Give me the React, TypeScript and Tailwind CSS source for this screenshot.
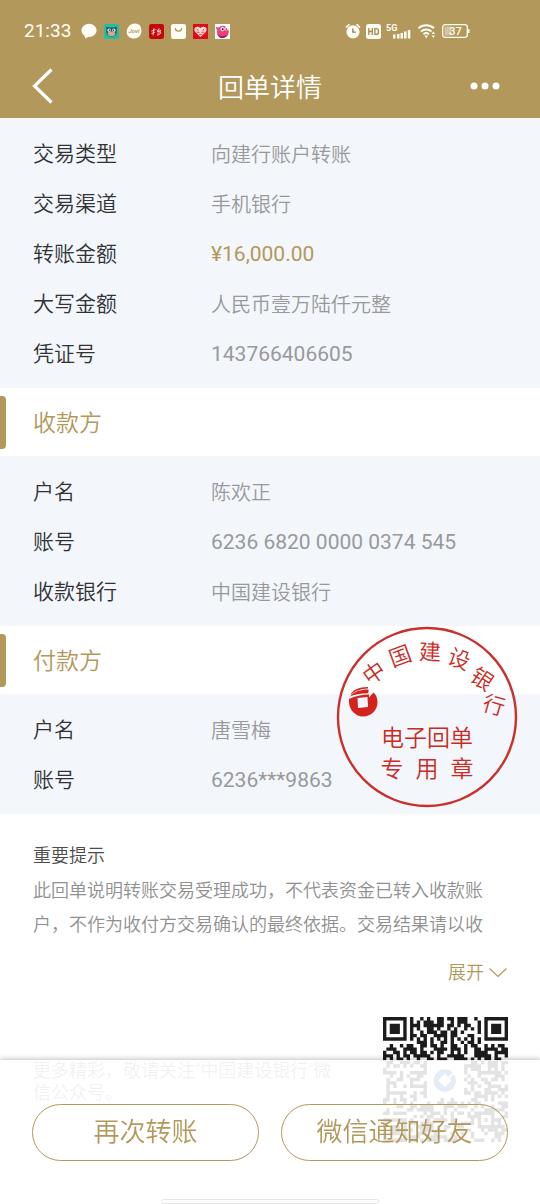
import type { ReactNode } from "react";

type Field = { label: string; value: string; numeric?: boolean; accent?: boolean };

const transaction: Field[] = [
  { label: "交易类型", value: "向建行账户转账" },
  { label: "交易渠道", value: "手机银行" },
  { label: "转账金额", value: "¥16,000.00", numeric: true, accent: true },
  { label: "大写金额", value: "人民币壹万陆仟元整" },
  { label: "凭证号", value: "143766406605", numeric: true },
];

const payee: Field[] = [
  { label: "户名", value: "陈欢正" },
  { label: "账号", value: "6236 6820 0000 0374 545", numeric: true },
  { label: "收款银行", value: "中国建设银行" },
];

const payer: Field[] = [
  { label: "户名", value: "唐雪梅" },
  { label: "账号", value: "6236***9863", numeric: true },
];

function StatusBar() {
  return (
    <div className="flex h-[54px] items-center pt-2 pl-6 font-normal text-[#fffdf5]">
      <span className="w-[57px] text-[19px] leading-6">21:33</span>
      <div className="flex items-center gap-[7px]">
        <svg className="size-4" viewBox="0 0 16 16" aria-hidden="true">
          <ellipse cx="8" cy="7.4" rx="7.6" ry="6.6" fill="currentColor" />
          <path d="M3 11.5 4.4 15.6 9 13z" fill="currentColor" />
        </svg>
        <svg className="size-[15px]" viewBox="0 0 16 16" aria-hidden="true">
          <rect width="16" height="16" rx="2.5" fill="#1fbfa0" />
          <path d="M2.500 3l3.500.8h4l3.500-.8V8.500c0 3-2 5-5.500 5s-5.500-2-5.500-5z" fill="#2b4d5a" />
          <circle cx="5.500" cy="6.600" r="1.800" fill="#dff3ee" />
          <circle cx="10.500" cy="6.600" r="1.800" fill="#dff3ee" />
          <ellipse cx="8" cy="10.500" rx="4.200" ry="2.500" fill="#c9ab92" />
          <circle cx="5.800" cy="6.700" r=".8" fill="#16232c" />
          <circle cx="10.200" cy="6.700" r=".8" fill="#16232c" />
        </svg>
        <svg className="size-4" viewBox="0 0 16 16" aria-hidden="true">
          <path d="M9 .6c4.500 0 6.600 3 6.400 7.400-.2 4.600-3.200 7.500-7.400 7.500S.7 13 .7 9 4 .6 9 .6z" fill="currentColor" />
          <text x="8" y="10.200" textAnchor="middle" fontSize="6" fontStyle="italic" fontWeight="500" fill="#a5884c">Jovi</text>
        </svg>
        <svg className="size-[15px]" viewBox="0 0 16 16" aria-hidden="true">
          <rect width="16" height="16" rx="2.500" fill="#c2080c" />
          <path d="M2.500 7.500 7 6M5.200 4.500 4.300 12M2.600 10l4-1.300M8.500 6l1.600 1.800M11 4.500 9 8.500l4-2M9 12c2-.5 4-2 3.500-3.500S9.500 9.500 9.200 12" fill="none" stroke="#ffe9df" strokeWidth=".9" />
        </svg>
        <svg className="size-[15px]" viewBox="0 0 16 16" aria-hidden="true">
          <rect width="16" height="16" rx="2.500" fill="currentColor" />
          <path d="M4.500 5c.6 3.600 6.400 3.600 7 0" fill="none" stroke="#a5884c" strokeWidth="1.200" strokeLinecap="round" />
        </svg>
        <svg className="size-[15px]" viewBox="0 0 16 16" aria-hidden="true">
          <rect width="16" height="16" fill="#dd0c18" />
          <path d="M8 13.800 2.300 8.500C.5 6 1.800 3 4.500 3 6.300 3 7.400 3.600 8 4.500 8.600 3.600 9.700 3 11.500 3c2.700 0 4 3 2.200 5.500z" fill="#ffd8d4" />
          <path d="M4 5.500l2 1.500M12 5.500l-2 1.500M4 8.800h3M9 8.800h3M6.500 11h3" stroke="#dd0c18" strokeWidth=".8" />
        </svg>
        <svg className="size-[15px]" viewBox="0 0 16 16" aria-hidden="true">
          <rect width="16" height="16" fill="#fff" />
          <circle cx="8.400" cy="8.200" r="6.300" fill="#ee3f79" />
          <path d="M2 10c3 4 8 4 12 1-2 5-10 6-12-1z" fill="#8a1d5c" />
          <circle cx="8" cy="5.400" r="2.200" fill="#fff" />
          <circle cx="12" cy="5" r="1.900" fill="#fff" />
          <circle cx="8.300" cy="5.600" r="1" fill="#440022" />
          <circle cx="12" cy="5.200" r=".8" fill="#440022" />
          <path d="M1 3l3 1-2 3z" fill="#e83a6f" />
        </svg>
      </div>
      <div className="mr-[70px] ml-auto flex items-center gap-[5px]">
        <svg className="size-4" viewBox="0 0 16 16" aria-hidden="true">
          <circle cx="8" cy="8.800" r="6.600" fill="currentColor" />
          <path d="M1.500 4 4 1.600M14.500 4 12 1.600" stroke="currentColor" strokeWidth="1.700" strokeLinecap="round" />
          <path d="M7.800 5.500v3.700h3" fill="none" stroke="#96793f" strokeWidth="1.300" />
        </svg>
        <svg className="size-[15px]" viewBox="0 0 15 15" aria-hidden="true">
          <rect width="15" height="15" rx="2.500" fill="currentColor" />
          <path d="M2.800 4v7M6.300 4v7M2.800 7.500h3.500M8.900 4.600v5.800h1.500q2 0 2-2V6.600q0-2-2-2z" fill="none" stroke="#a5884c" strokeWidth="1.300" />
        </svg>
        <svg className="h-4 w-[26px]" viewBox="0 0 26 16" aria-hidden="true">
          <text x="0" y="7.500" fontSize="9" fontWeight="700" fill="currentColor">5G</text>
          <path d="M7 11.500h2.500V15.500H7zM11 11h2.500v4.500H11zM14.500 10h2.500v5.500h-2.500zM18 8.500h2.500v7H18zM21.800 7h2.500v8.500h-2.500z" fill="currentColor" />
        </svg>
        <svg className="h-4 w-5" viewBox="0 0 20 16" aria-hidden="true">
          <path d="M1.500 5.200c4.300-4 11.200-4 15.500 0M4 8.400c3-2.700 7.500-2.700 10.500 0M6.500 11.200c1.700-1.400 3.800-1.400 5.500 0" fill="none" stroke="currentColor" strokeWidth="2" />
          <path d="M7.400 12.500h3.700L9.200 15.200zM14.600 11l1.700-2.400L18 11zM14.600 12.500H18l-1.700 2.400z" fill="currentColor" />
        </svg>
        <svg className="h-4 w-7" viewBox="0 0 28 16" aria-hidden="true">
          <rect x=".7" y="1.700" width="24.600" height="12.600" rx="2.500" fill="none" stroke="currentColor" strokeWidth="1.300" />
          <rect x="2.500" y="3.500" width="7" height="9" fill="currentColor" opacity=".45" />
          <path d="M26.800 6v4" stroke="currentColor" strokeWidth="1.400" />
          <text x="13.500" y="12" textAnchor="middle" fontSize="11" fontWeight="500" fill="currentColor">37</text>
        </svg>
      </div>
    </div>
  );
}

function NavBar() {
  return (
    <div className="grid h-16 grid-cols-3 items-center px-8 text-white">
      <button type="button" aria-label="返回" className="justify-self-start">
        <svg className="h-9 w-[21px]" viewBox="0 0 21 36" fill="none" aria-hidden="true">
          <path d="M19.500 1.500 2.500 18l17 16.500" stroke="currentColor" strokeWidth="3.200" />
        </svg>
      </button>
      <h1 className="pt-1 text-center text-[26px] leading-9 whitespace-nowrap">回单详情</h1>
      <button type="button" aria-label="更多" className="mr-2 justify-self-end">
        <svg className="h-2 w-[30px]" viewBox="0 0 30 8" fill="currentColor" aria-hidden="true">
          <circle cx="4" cy="4" r="3.500" />
          <circle cx="15" cy="4" r="3.500" />
          <circle cx="26" cy="4" r="3.500" />
        </svg>
      </button>
    </div>
  );
}

function Panel({ fields }: { fields: Field[] }) {
  return (
    <dl className="bg-[#f3f7fb] pt-3 pb-2">
      {fields.map((f) => (
        <div key={f.label} className="flex h-[50px] items-center pl-[33px]">
          <dt className="w-[178px] shrink-0 text-[21px] text-[#303236]">{f.label}</dt>
          <dd
            className={`${f.numeric ? "text-[21px] font-normal" : "text-[20px]"} ${f.accent ? "text-[#b2985b]" : "text-[#98999b]"}`}
          >
            {f.value}
          </dd>
        </div>
      ))}
    </dl>
  );
}

function SectionTitle({ children }: { children: ReactNode }) {
  return (
    <div className="flex h-[68px] items-center bg-white">
      <span className="h-[53px] w-[6px] rounded-r-[4px] bg-[#b2985b]" />
      <h2 className="pt-1 pl-[27px] text-[23px] text-[#b2985b]">{children}</h2>
    </div>
  );
}

const sealArc = [
  { char: "中", x: -53, y: -44, tilt: -35 },
  { char: "国", x: -27, y: -61, tilt: -20 },
  { char: "建", x: 3, y: -65, tilt: 2 },
  { char: "设", x: 32, y: -58, tilt: 20 },
  { char: "银", x: 55, y: -38, tilt: 34 },
  { char: "行", x: 67, y: -12, tilt: 16 },
];

function Seal() {
  return (
    <svg
      className="absolute top-0 right-[22px] size-[182px]"
      viewBox="-91 -91 182 182"
      fill="#cb2a24"
      role="img"
      aria-label="电子回单专用章"
    >
      <circle r="89" fill="none" stroke="#c9302b" strokeWidth="2.400" />
      {sealArc.map((s) => (
        <text key={s.char} transform={`translate(${s.x} ${s.y}) rotate(${s.tilt})`} y="8" textAnchor="middle" fontSize="22">
          {s.char}
        </text>
      ))}
      <g transform="translate(-64 -15)" fill="#d3231c">
        <path
          fillRule="evenodd"
          d="M-14-3C-15 7-8 14.500 0 14.500 8.500 14.500 14.500 8 14.500 0 14.500-4 13-7.500 10.500-9.500L6-4.500V-7.500C-1-7.500-8-6-14-3zM-5.500-4 4.500-5 5 5-5 6z"
        />
        <path d="M-12.500-7C-11-12-4-15 5-15V-13.600C-3-13.300-8.500-11-12.500-7z" />
        <path d="M-13-5.500C-9-10.500-2-12.500 5.500-12.400V-8.700C-2-8.700-8-8-13-5.500z" />
      </g>
      <text y="29" textAnchor="middle" fontSize="23">电子回单</text>
      <text y="60" textAnchor="middle" fontSize="23">
        <tspan x="-35">专</tspan>
        <tspan x="0">用</tspan>
        <tspan x="35">章</tspan>
      </text>
    </svg>
  );
}

const qrHead = [
  "#######.#..#.#..##.##.###..#..#######",
  "#.....#.#.#.###.##..#.###...#.#.....#",
  "#.###.#.###.######.##.#.##..#.#.###.#",
  "#.###.#.#.#..##.#..#.#..#.#.#.#.###.#",
  "#.###.#.#..#.###.##.##.#....#.#.###.#",
  "#.....#.##.##..####.##...##...#.....#",
  "#######.#.#.#.#.#.#.#.#.#.#.#.#######",
  "..........###.#..##.#..#.##.#........",
  "..#..#.##..##.##.#..##..#.##..#.#.##.",
  ".###..####.#...####.###.#..##.####.##",
  "#..##.#.##.##.#.##..#.#.#..####..####",
  "###.#.##.#####..#..#####...#####.#..#",
  "#.#.##.#..#..##.###..####.#.#.##.##..",
  ".##..###.##.#..##.######..##.#.###.##",
];

function qrPath() {
  const size = 37;
  let state = 2463534;
  let d = "";
  for (let y = 0; y < size; y++) {
    for (let x = 0; x < size; x++) {
      state ^= state << 13;
      state ^= state >>> 17;
      state ^= state << 5;
      let on = y < qrHead.length ? qrHead[y][x] === "#" : (state & 64) !== 0;
      if (x > 12 && x < 24 && y > 12 && y < 24) on = false;
      if (x < 8 && y > 28) {
        const r = Math.max(Math.abs(x - 3), Math.abs(y - 33));
        on = r === 3 || r < 2;
      }
      if (x > 27 && x < 33 && y > 27 && y < 33) {
        on = Math.max(Math.abs(x - 30), Math.abs(y - 30)) !== 1;
      }
      if (on) d += `M${x} ${y}h1v1h-1z`;
    }
  }
  return d;
}

function QrCode() {
  return (
    <svg className="size-[125px] shrink-0" viewBox="0 0 37 37" role="img" aria-label="公众号二维码">
      <path d={qrPath()} fill="#1c1c1c" />
      <circle cx="18.300" cy="18.800" r="3.300" fill="#2460b8" />
      <path d="M18.300 16.800l2 2-2 2-2-2z" fill="#fff" />
      <path d="M19 18.500 22 15.500" stroke="#fff" strokeWidth=".7" />
    </svg>
  );
}

export default function App() {
  return (
    <div
      lang="zh-CN"
      className="min-h-screen bg-white font-[Roboto,'Noto_Sans_CJK_SC',sans-serif] font-[350]"
    >
      <header className="bg-[#b2985b]">
        <StatusBar />
        <NavBar />
      </header>
      <main>
        <Panel fields={transaction} />
        <section>
          <SectionTitle>收款方</SectionTitle>
          <Panel fields={payee} />
        </section>
        <section className="relative">
          <SectionTitle>付款方</SectionTitle>
          <Panel fields={payer} />
          <Seal />
        </section>
        <section className="pt-6 pl-[33px]">
          <h3 className="text-[18px] leading-9 text-[#4c4c4c]">重要提示</h3>
          <p className="pr-[45px] text-[18px] leading-[34px] text-[#909090]">
            此回单说明转账交易受理成功，不代表资金已转入收款账户，不作为收付方交易确认的最终依据。交易结果请以收
          </p>
          <div className="flex justify-end pt-[18px] pr-8">
            <button type="button" className="flex items-center gap-1 text-[18px] leading-[26px] text-[#b2985b]">
              展开
              <svg className="h-3 w-5" viewBox="0 0 20 12" fill="none" aria-hidden="true">
                <path d="M1.500 1.500 10 9.500l8.500-8" stroke="currentColor" strokeWidth="1.200" />
              </svg>
            </button>
          </div>
        </section>
        <section className="flex items-center justify-between pt-[31px] pr-8 pl-[33px]">
          <p className="max-w-[316px] pt-1 text-[18px] leading-[22px] text-[#8c8c8c]">
            更多精彩，敬请关注"中国建设银行"微信公众号。
          </p>
          <QrCode />
        </section>
      </main>
      <footer className="fixed inset-x-0 bottom-0 flex h-[144px] flex-col justify-between bg-white/88 pt-11 shadow-[0_-1px_5px_rgba(0,0,0,0.25)]">
        <div className="grid grid-cols-2 gap-[22px] px-8">
          <button type="button" className="h-[57px] rounded-full border border-[#b2985b] text-[26px] text-[#b2985b]">
            再次转账
          </button>
          <button type="button" className="h-[57px] rounded-full border border-[#b2985b] text-[26px] text-[#b2985b]">
            微信通知好友
          </button>
        </div>
        <span className="h-[5px] w-[218px] self-center rounded-full border border-[#e6e6e6] bg-white" />
      </footer>
    </div>
  );
}
